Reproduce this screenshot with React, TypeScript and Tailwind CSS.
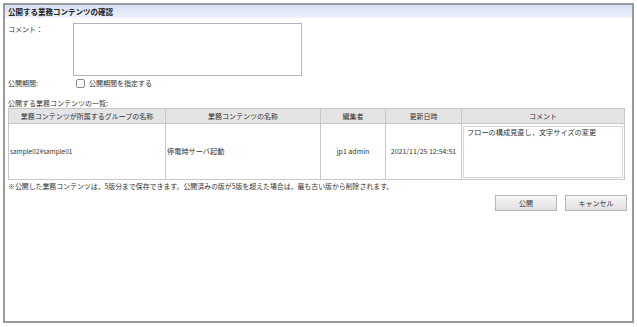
import React from "react";

const jp = { fontFamily: '"Noto Sans CJK JP", "Liberation Sans", sans-serif' };

type Row = {
  group: string;
  name: string;
  editor: string;
  updated: string;
  comment: string;
};

const rows: Row[] = [
  {
    group: "sample02¥sample01",
    name: "停電時サーバ起動",
    editor: "jp1 admin",
    updated: "2021/11/25 12:54:51",
    comment: "フローの構成見直し，文字サイズの変更",
  },
];

export default function App() {
  return (
    <div className="h-[327px] w-[637px] bg-white pl-[3px] pt-[3px] text-[#333]" style={jp}>
      <div className="flex h-[320px] w-[631px] flex-col border-2 border-[#9a9a9a] bg-white">
        {/* Title bar */}
        <div className="flex h-[13px] items-center bg-gradient-to-b from-[#d6e0f4] to-[#eef2fb] pl-[3px] text-[7.5px] font-bold leading-none text-[#222]">
          公開する業務コンテンツの確認
        </div>

        {/* Comment */}
        <div className="mt-[5px] flex pl-[3px]">
          <div className="w-[65px] pt-[2px] text-[7px] leading-[9px]">コメント：</div>
          <div className="h-[53px] w-[229px] border border-[#b5b5b5] bg-white" />
        </div>

        {/* Publish period */}
        <div className="mt-[3px] flex items-center pl-[3px]">
          <div className="w-[68px] text-[7px] leading-[9px]">公開期間:</div>
          <div className="h-[9px] w-[9px] rounded-[2px] border border-[#8a8a8a] bg-white" />
          <div className="ml-[4px] text-[7px] leading-[9px]">公開期間を指定する</div>
        </div>

        {/* List */}
        <div className="mt-[11px] pl-[3px] text-[7px] leading-[9px]">公開する業務コンテンツの一覧:</div>
        <div className="pl-[3px]">
          <table className="w-[616px] table-fixed border-collapse text-[7px] leading-[9px]">
            <colgroup>
              <col className="w-[157px]" />
              <col className="w-[155px]" />
              <col className="w-[65px]" />
              <col className="w-[76px]" />
              <col className="w-[163px]" />
            </colgroup>
            <thead>
              <tr className="h-[15px] bg-[#e4e4e4]">
                <th className="border border-[#c8c8c8] font-normal">業務コンテンツが所属するグループの名称</th>
                <th className="border border-[#c8c8c8] font-normal">業務コンテンツの名称</th>
                <th className="border border-[#c8c8c8] font-normal">編集者</th>
                <th className="border border-[#c8c8c8] font-normal">更新日時</th>
                <th className="border border-[#c8c8c8] font-normal">コメント</th>
              </tr>
            </thead>
            <tbody>
              {rows.map((r) => (
                <tr key={r.group} className="h-[56px]">
                  <td className="border border-[#c8c8c8] pl-[1px] text-[6.5px]">{r.group}</td>
                  <td className="border border-[#c8c8c8] pl-[1px] text-[7.2px]">{r.name}</td>
                  <td className="border border-[#c8c8c8] text-center text-[7px]">{r.editor}</td>
                  <td className="whitespace-nowrap border border-[#c8c8c8] text-center text-[7px]">{r.updated}</td>
                  <td className="border border-[#c8c8c8] p-[1px]">
                    <div className="h-[52px] w-full border border-[#d4d4d4] px-[3px] pt-[1px] text-[7.2px]">{r.comment}</div>
                  </td>
                </tr>
              ))}
            </tbody>
          </table>
        </div>

        <div className="mt-[2px] pl-[3px] text-[6.9px] leading-[9px]">
          ※公開した業務コンテンツは，5版分まで保存できます。公開済みの版が5版を超えた場合は，最も古い版から削除されます。
        </div>

        {/* Buttons */}
        <div className="mt-[4px] flex justify-end gap-[8px] pr-[5px]">
          <button
            type="button"
            className="h-[16px] w-[62px] border border-[#b5b5b5] bg-gradient-to-b from-[#f6f6f6] to-[#e2e2e2] text-[7px] leading-none text-[#333]"
          >
            公開
          </button>
          <button
            type="button"
            className="h-[16px] w-[62px] border border-[#b5b5b5] bg-gradient-to-b from-[#f6f6f6] to-[#e2e2e2] text-[7px] leading-none text-[#333]"
          >
            キャンセル
          </button>
        </div>
      </div>
    </div>
  );
}
